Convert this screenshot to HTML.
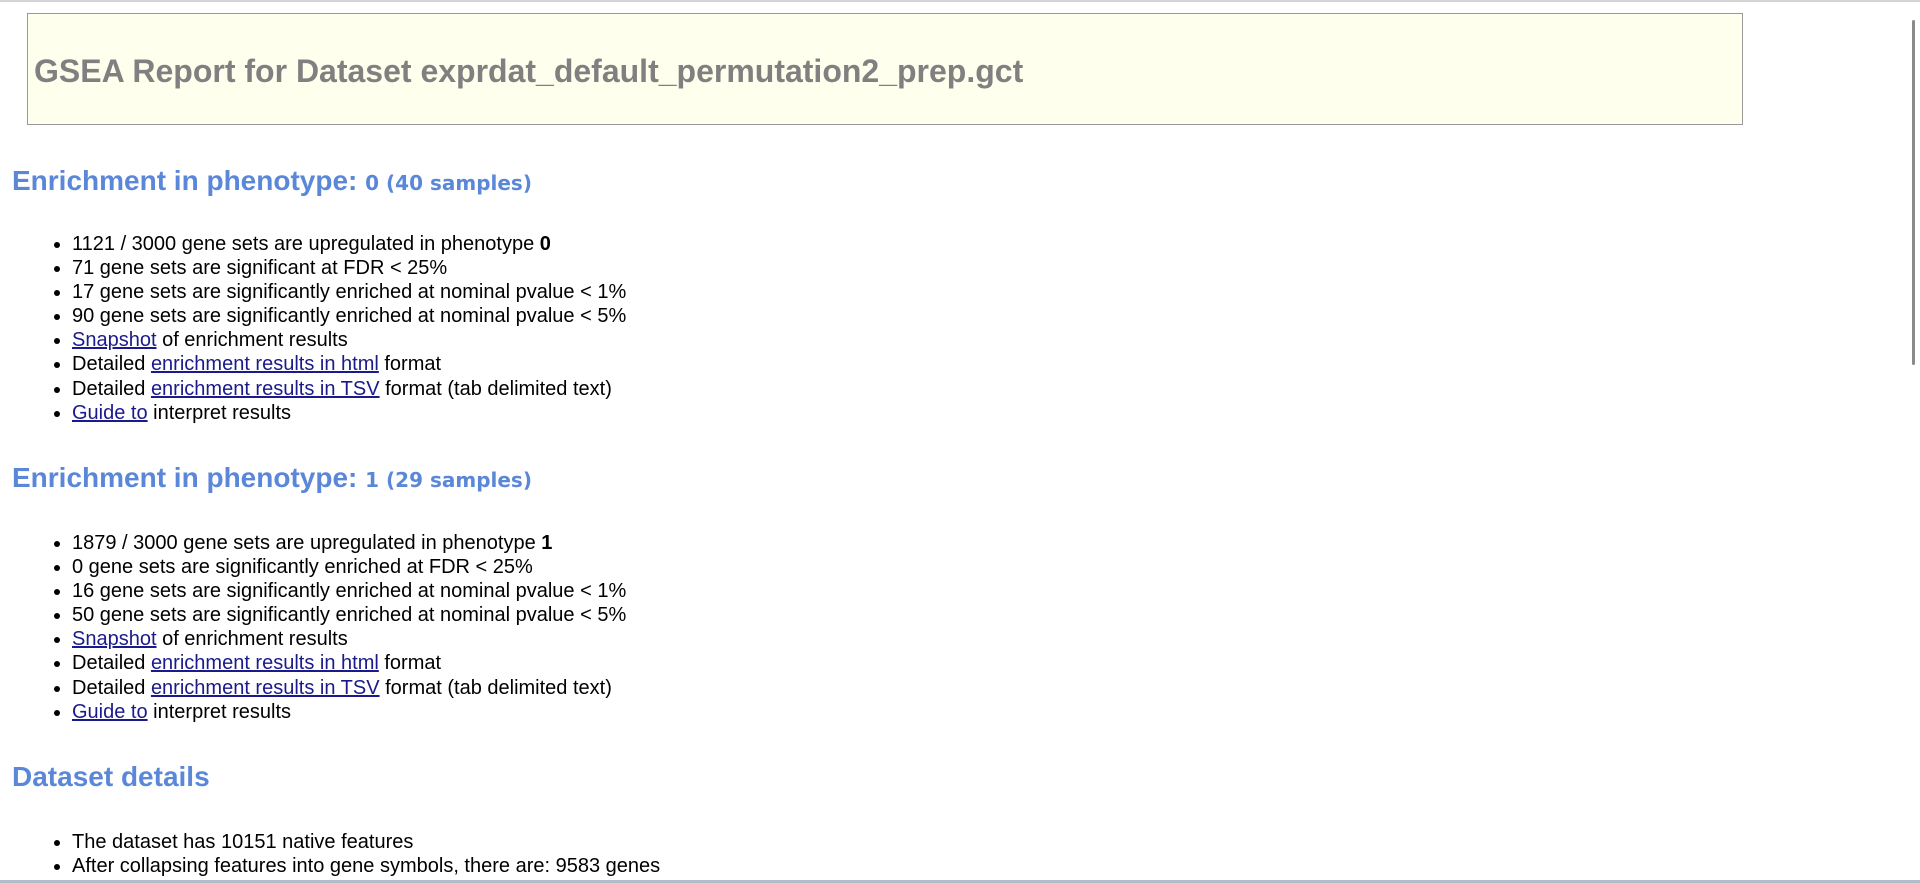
<!DOCTYPE html>
<html><head><meta charset="utf-8"><style>
html,body{margin:0;padding:0;background:#fff;}
body{width:1920px;height:883px;overflow:hidden;position:relative;font-family:"Liberation Sans",Arial,sans-serif;font-size:20px;color:#000;}
.topline{position:absolute;left:0;top:0;width:1920px;height:2px;background:#d4d4d4;}
.botline{position:absolute;left:0;top:880px;width:1920px;height:3px;background:#b4bccb;}
.sb{position:absolute;left:1912px;top:20px;width:3px;height:345px;background:#8a8a8a;border-radius:2px;}
.box{position:absolute;left:27px;top:13px;width:1714px;height:110px;background:#ffffee;border:1px solid #999;}
.box h1{position:absolute;left:6px;top:39px;margin:0;font-size:32px;line-height:36px;color:#808080;font-weight:bold;}
h2{position:absolute;left:12px;margin:0;font-size:28px;line-height:32px;color:#5b87d9;font-weight:bold;}
h2 small{font-size:20px;font-family:"DejaVu Sans","Liberation Sans",sans-serif;}
ul{position:absolute;left:0;margin:0;padding:0 0 0 72px;line-height:24.1px;list-style:disc;}
a{color:#1a1a8c;text-decoration:underline;}
</style></head><body>
<div class="topline"></div>
<div class="box"><h1>GSEA Report for Dataset exprdat_default_permutation2_prep.gct</h1></div>
<h2 style="top:165px">Enrichment in phenotype: <small>0 (40 samples)</small></h2>
<ul style="top:232px">
<li>1121 / 3000 gene sets are upregulated in phenotype <b>0</b></li>
<li>71 gene sets are significant at FDR &lt; 25%</li>
<li>17 gene sets are significantly enriched at nominal pvalue &lt; 1%</li>
<li>90 gene sets are significantly enriched at nominal pvalue &lt; 5%</li>
<li><a>Snapshot</a> of enrichment results</li>
<li>Detailed <a>enrichment results in html</a> format</li>
<li>Detailed <a>enrichment results in TSV</a> format (tab delimited text)</li>
<li><a>Guide to</a> interpret results</li>
</ul>
<h2 style="top:462px">Enrichment in phenotype: <small>1 (29 samples)</small></h2>
<ul style="top:531px">
<li>1879 / 3000 gene sets are upregulated in phenotype <b>1</b></li>
<li>0 gene sets are significantly enriched at FDR &lt; 25%</li>
<li>16 gene sets are significantly enriched at nominal pvalue &lt; 1%</li>
<li>50 gene sets are significantly enriched at nominal pvalue &lt; 5%</li>
<li><a>Snapshot</a> of enrichment results</li>
<li>Detailed <a>enrichment results in html</a> format</li>
<li>Detailed <a>enrichment results in TSV</a> format (tab delimited text)</li>
<li><a>Guide to</a> interpret results</li>
</ul>
<h2 style="top:761px">Dataset details</h2>
<ul style="top:830px">
<li>The dataset has 10151 native features</li>
<li>After collapsing features into gene symbols, there are: 9583 genes</li>
</ul>
<div class="sb"></div>
<div class="botline"></div>
</body></html>
